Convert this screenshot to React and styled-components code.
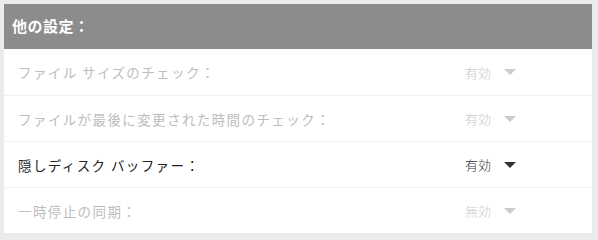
import styled, { createGlobalStyle } from "styled-components";

const GlobalStyle = createGlobalStyle`
  body {
    margin: 0;
    padding: 4px;
    background: #ebebeb;
    font-family: "Noto Sans CJK TC", "Noto Sans CJK JP", "Noto Sans", sans-serif;
  }
`;

const Panel = styled.section`
  width: 588px;
  background: #ffffff;
`;

const Header = styled.h2`
  margin: 0;
  height: 45px;
  padding: 0 8px 3px;
  box-sizing: border-box;
  display: flex;
  align-items: center;
  background: #8c8c8c;
  color: #ffffff;
  font-size: 15px;
  font-weight: bold;
  letter-spacing: 0.5px;
`;

const Row = styled.div`
  height: 45px;
  display: flex;
  align-items: center;
  padding: 0 76px 0 14px;
  border-top: 1px solid #f0f0f0;
  &:first-of-type {
    border-top: none;
    height: 46px;
  }
`;

const Label = styled.span`
  flex: 1;
  font-size: 13.5px;
  letter-spacing: 1.4px;
  color: ${(p) => (p.$disabled ? "#bdbdbd" : "#222222")};
`;

const Select = styled.div`
  display: flex;
  align-items: center;
  gap: 13px;
  font-size: 13px;
  font-weight: 300;
  color: ${(p) => (p.$disabled ? "#c8c8c8" : "#333333")};
`;

const Caret = styled.span`
  width: 0;
  height: 0;
  border-left: 6px solid transparent;
  border-right: 6px solid transparent;
  border-top: 6px solid ${(p) => (p.$disabled ? "#cccccc" : "#333333")};
`;

const settings = [
  { label: "ファイル サイズのチェック：", value: "有効", disabled: true },
  { label: "ファイルが最後に変更された時間のチェック：", value: "有効", disabled: true },
  { label: "隠しディスク バッファー：", value: "有効", disabled: false },
  { label: "一時停止の同期：", value: "無効", disabled: true },
];

export default function App() {
  return (
    <>
      <GlobalStyle />
      <Panel>
        <Header>他の設定：</Header>
        <div>
          {settings.map((s) => (
            <Row key={s.label}>
              <Label $disabled={s.disabled}>{s.label}</Label>
              <Select $disabled={s.disabled}>
                {s.value}
                <Caret $disabled={s.disabled} />
              </Select>
            </Row>
          ))}
        </div>
      </Panel>
    </>
  );
}
